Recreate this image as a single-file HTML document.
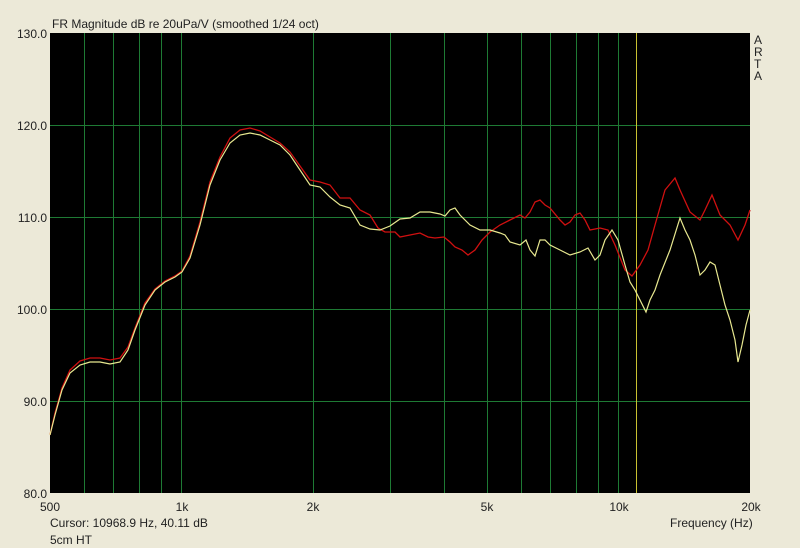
<!DOCTYPE html>
<html><head><style>
html,body{margin:0;padding:0;background:#ece9d8;}
svg{display:block;font-family:"Liberation Sans",Arial,sans-serif;}
</style></head><body>
<svg width="800" height="548" viewBox="0 0 800 548" xmlns="http://www.w3.org/2000/svg">
<rect width="800" height="548" fill="#ece9d8"/>
<rect x="50" y="33" width="700" height="460" fill="#000"/>
<g stroke="#1e7a34" stroke-width="1" shape-rendering="crispEdges">
<line x1="84.5" y1="33" x2="84.5" y2="493"/>
<line x1="113.5" y1="33" x2="113.5" y2="493"/>
<line x1="139.5" y1="33" x2="139.5" y2="493"/>
<line x1="161.5" y1="33" x2="161.5" y2="493"/>
<line x1="181.5" y1="33" x2="181.5" y2="493"/>
<line x1="313.5" y1="33" x2="313.5" y2="493"/>
<line x1="390.5" y1="33" x2="390.5" y2="493"/>
<line x1="444.5" y1="33" x2="444.5" y2="493"/>
<line x1="487.5" y1="33" x2="487.5" y2="493"/>
<line x1="521.5" y1="33" x2="521.5" y2="493"/>
<line x1="550.5" y1="33" x2="550.5" y2="493"/>
<line x1="576.5" y1="33" x2="576.5" y2="493"/>
<line x1="598.5" y1="33" x2="598.5" y2="493"/>
<line x1="618.5" y1="33" x2="618.5" y2="493"/>
<line x1="50" y1="125.5" x2="750" y2="125.5"/>
<line x1="50" y1="217.5" x2="750" y2="217.5"/>
<line x1="50" y1="309.5" x2="750" y2="309.5"/>
<line x1="50" y1="401.5" x2="750" y2="401.5"/>
</g>
<line x1="636.5" y1="33" x2="636.5" y2="493" stroke="#c8c030" stroke-width="1" shape-rendering="crispEdges"/>
<polyline fill="none" stroke="#d01010" stroke-width="1.3" points="50,435 55,413 62,388 70,370 80,361 90,358 100,358 110,360 120,358 128,347 135,328 145,303 155,289 165,281 175,276 182,271 190,256 200,222 210,182 220,157 230,138 240,130 250,128 260,131 270,137 280,143 290,152 300,166 310,180 320,182 330,185 340,198 350,198 360,210 370,215 378,228 385,232 395,232 400,237 405,236 410,235 420,233 428,237 435,238 444,237 450,242 455,247 462,250 468,255 475,250 482,240 490,232 500,225 510,220 520,215 525,218 530,212 535,202 540,200 545,205 550,208 560,220 565,225 570,222 575,215 580,213 585,220 590,230 600,228 608,230 615,245 625,270 632,276 640,265 648,250 655,225 665,190 675,178 680,190 690,212 700,220 705,210 712,195 720,215 730,225 738,240 745,225 750,210"/>
<polyline fill="none" stroke="#e8e890" stroke-width="1.2" points="50,435 55,415 62,390 70,373 80,365 90,362 100,362 110,364 120,362 128,350 135,330 145,305 155,290 165,282 175,277 182,272 190,258 200,225 210,185 220,160 230,143 240,135 250,133 260,135 270,140 280,145 290,155 300,170 310,185 320,187 330,197 340,205 350,208 360,225 370,229 380,230 390,226 400,219 410,218 420,212 430,212 440,214 445,216 450,210 455,208 460,215 470,225 480,230 490,230 500,233 505,235 510,242 520,245 526,240 530,250 535,256 540,240 545,240 550,245 560,250 570,255 580,252 588,248 595,260 600,255 605,240 612,230 618,240 625,265 630,282 635,290 640,300 646,312 650,300 655,290 660,275 670,250 680,218 685,230 690,240 695,255 700,275 705,270 710,262 715,265 720,285 725,305 730,320 735,340 738,362 742,345 746,325 750,310"/>
<g font-size="12" fill="#222">
<text x="52" y="28">FR Magnitude dB re 20uPa/V (smoothed 1/24 oct)</text>
<text x="47" y="38" text-anchor="end">130.0</text>
<text x="47" y="130" text-anchor="end">120.0</text>
<text x="47" y="222" text-anchor="end">110.0</text>
<text x="47" y="314" text-anchor="end">100.0</text>
<text x="47" y="406" text-anchor="end">90.0</text>
<text x="47" y="498" text-anchor="end">80.0</text>
<text x="40" y="511">500</text>
<text x="182" y="511" text-anchor="middle">1k</text>
<text x="313" y="511" text-anchor="middle">2k</text>
<text x="487" y="511" text-anchor="middle">5k</text>
<text x="619" y="511" text-anchor="middle">10k</text>
<text x="751" y="511" text-anchor="middle">20k</text>
<text x="50" y="527">Cursor: 10968.9 Hz, 40.11 dB</text>
<text x="50" y="544">5cm HT</text>
<text x="670" y="527">Frequency (Hz)</text>
<text x="754" y="44">A</text>
<text x="754" y="56">R</text>
<text x="754" y="68">T</text>
<text x="754" y="80">A</text>
</g>
</svg>
</body></html>
